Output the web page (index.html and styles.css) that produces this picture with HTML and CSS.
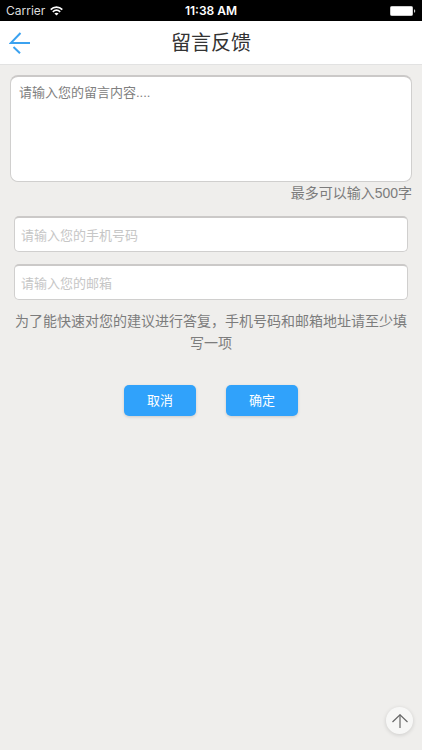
FILE: index.html
```html
<!DOCTYPE html>
<html lang="zh-CN">
  <head>
    <meta charset="utf-8">
    <title>留言反馈</title>
    <meta name="viewport" content="width=device-width, initial-scale=1">
    <link rel="stylesheet" href="styles.css">
  </head>
  <body>
    <div class="status-bar">
      <div class="status-left">
        <span>Carrier</span>
        <svg class="wifi" width="13" height="10" viewBox="0 0 13 10" fill="none" stroke="#fff" stroke-width="1.7">
          <path d="M0.7 3.6C4 0.3 9 0.3 12.3 3.6"/>
          <path d="M2.8 5.8C5 3.8 8 3.8 10.2 5.8"/>
          <path d="M6.5 9.6L4.4 7.5C5.6 6.4 7.4 6.4 8.6 7.5Z" fill="#fff" stroke="none"/>
        </svg>
      </div>
      <span class="status-time">11:38 AM</span>
      <div class="status-right">
        <svg width="26" height="10" viewBox="0 0 26 10">
          <rect x="0.5" y="0.5" width="22" height="9" rx="1" fill="#fff" stroke="#ccc"/>
          <path d="M24 3.5V6.5H24.6Q25.2 6.5 25.2 5T24.6 3.5Z" fill="#ccc"/>
        </svg>
      </div>
    </div>
    <header class="header">
      <button type="button" class="back" aria-label="返回">
        <svg width="22" height="22" viewBox="0 0 22 22" fill="none" stroke="#3ba2f0" stroke-width="2">
          <path d="M11.5 1L1.8 11H21"/>
          <path d="M4.5 15L11 21.2"/>
        </svg>
      </button>
      <h1>留言反馈</h1>
    </header>
    <form class="feedback" onsubmit="return false">
      <textarea class="message" maxlength="500" aria-label="留言内容" placeholder="请输入您的留言内容...."></textarea>
      <p class="limit">最多可以输入500字</p>
      <div class="fields">
        <input type="tel" aria-label="手机号码" placeholder="请输入您的手机号码">
        <input type="email" aria-label="邮箱" placeholder="请输入您的邮箱">
      </div>
      <p class="hint">为了能快速对您的建议进行答复，手机号码和邮箱地址请至少填写一项</p>
      <div class="actions">
        <button type="reset">取消</button>
        <button type="submit">确定</button>
      </div>
    </form>
    <button type="button" class="to-top" aria-label="返回顶部">
      <svg width="16" height="14" viewBox="0 0 16 14" fill="none" stroke="#666" stroke-width="1.2">
        <path d="M0.5 8L8 0.8L15.5 8"/>
        <path d="M8 0.8V14"/>
      </svg>
    </button>
  </body>
</html>
```

FILE: styles.css
```css
* {box-sizing: border-box;}
body {margin: 0; background-color: #efeeec; color: #7c7c7c; font-family: "Liberation Sans", "Noto Sans CJK SC", sans-serif; font-size: 14px;}
h1, p {margin: 0; font-weight: normal;}
button, input, textarea {font-family: inherit;}
button {border: 0; padding: 0; cursor: pointer;}

.status-bar {display: flex; align-items: center; height: 21px; padding: 0 6px; background-color: #000; color: #fff; font-family: Inter, sans-serif; font-size: 12px;}
.status-left, .status-right {flex: 1; display: flex; align-items: center; gap: 5px;}
.status-left {color: #ddd;}
.status-right {justify-content: flex-end;}
.status-time {font-weight: 600;}

.header {display: grid; grid-template-columns: 40px 1fr 40px; align-items: center; height: 44px; background-color: #fff; border-bottom: 1px solid #e2e2e2;}
.header h1 {color: #333; font-size: 20px; line-height: 28px; text-align: center;}
.back {display: flex; justify-content: center; background: none;}

.feedback {padding: 10px;}
.message, .fields input {display: block; width: 100%; background-color: #fff; border: 1px solid #d0cfce; border-top: 2px solid #cbc9c8; outline: none; resize: none;}
.message {height: 107px; padding: 6px 8px; border-radius: 8px; font-size: 13px; line-height: 20px;}
.message::placeholder {color: #808080;}
.limit {line-height: 22px; text-align: right;}
.fields {display: flex; flex-direction: column; gap: 12px; padding: 12px 4px 10px;}
.fields input {height: 36px; padding: 2px 6px 0; border-radius: 5px; font-size: 13px;}
.fields input::placeholder {color: #c6c6c6;}
.hint {line-height: 22px; text-align: center;}
.actions {display: flex; justify-content: center; gap: 30px; padding-top: 31px;}
.actions button {width: 72px; height: 31px; padding-bottom: 3px; border-radius: 5px; background-color: #30a2fb; color: #fff; font-size: 13px; box-shadow: 0 1px 3px rgba(0, 0, 0, 0.15);}

.to-top {position: fixed; right: 9px; bottom: 16px; display: flex; align-items: center; justify-content: center; width: 27px; height: 27px; border-radius: 50%; background-color: #f7f7f6; box-shadow: 0 1px 4px rgba(0, 0, 0, 0.15);}
```
